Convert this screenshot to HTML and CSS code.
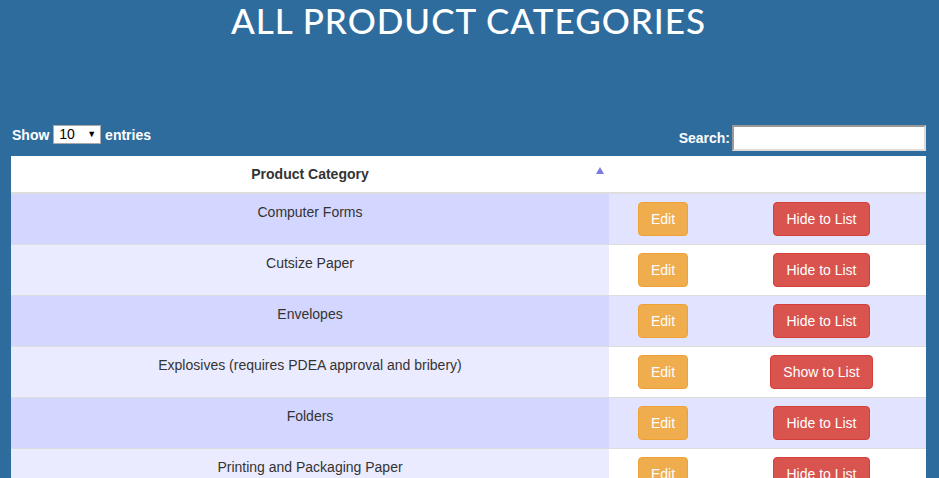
FILE: index.html
```html
<!DOCTYPE html>
<html>
<head>
<meta charset="utf-8">
<title>All Product Categories</title>
<link rel="stylesheet" href="styles.css">
</head>
<body>
<div class="page">
  <h1 class="title">ALL PRODUCT CATEGORIES</h1>
  <div class="controls">
    <label class="length">Show <span class="select">10<span class="caret">&#9660;</span></span> entries</label>
    <label class="filter">Search:<input class="search" type="text"></label>
  </div>
  <table class="table">
    <colgroup>
      <col class="c1">
      <col class="c2">
      <col class="c3">
    </colgroup>
    <thead>
      <tr>
        <th class="sorted">Product Category</th>
        <th></th>
        <th></th>
      </tr>
    </thead>
    <tbody>
      <tr class="odd">
        <td class="sort">Computer Forms</td>
        <td><span class="btn warn">Edit</span></td>
        <td><span class="btn danger">Hide to List</span></td>
      </tr>
      <tr class="even">
        <td class="sort">Cutsize Paper</td>
        <td><span class="btn warn">Edit</span></td>
        <td><span class="btn danger">Hide to List</span></td>
      </tr>
      <tr class="odd">
        <td class="sort">Envelopes</td>
        <td><span class="btn warn">Edit</span></td>
        <td><span class="btn danger">Hide to List</span></td>
      </tr>
      <tr class="even">
        <td class="sort">Explosives (requires PDEA approval and bribery)</td>
        <td><span class="btn warn">Edit</span></td>
        <td><span class="btn danger">Show to List</span></td>
      </tr>
      <tr class="odd">
        <td class="sort">Folders</td>
        <td><span class="btn warn">Edit</span></td>
        <td><span class="btn danger">Hide to List</span></td>
      </tr>
      <tr class="even">
        <td class="sort">Printing and Packaging Paper</td>
        <td><span class="btn warn">Edit</span></td>
        <td><span class="btn danger">Hide to List</span></td>
      </tr>
    </tbody>
  </table>
</div>
</body>
</html>
```
FILE: styles.css
```css
html {
  overflow: hidden;
}
body {
  margin: 0;
  background: #2e6c9e;
  font-family: "Liberation Sans", Arial, sans-serif;
  font-size: 14px;
  color: #333;
}
.page {
  padding: 0 13px 0 11px;
}
.title {
  margin: 0;
  padding-top: 0;
  height: 125px;
  font-family: "Lato", "Open Sans", sans-serif;
  font-weight: 500;
  font-size: 35px;
  letter-spacing: 1px;
  line-height: 40px;
  text-align: center;
  color: #fff;
}
.controls {
  display: flex;
  justify-content: space-between;
  align-items: flex-start;
  height: 31px;
}
.length {
  line-height: 20px;
  font-weight: bold;
  color: #fff;
  padding-left: 1px;
}
.select {
  display: inline-block;
  vertical-align: top;
  box-sizing: border-box;
  width: 48px;
  height: 19px;
  margin: 0;
  padding-left: 5px;
  background: #fff;
  border: 1px solid #a9a9a9;
  color: #000;
  font-weight: normal;
  font-size: 14px;
  line-height: 17px;
  position: relative;
}
.caret {
  position: absolute;
  right: 4px;
  top: 0;
  font-size: 9px;
  line-height: 17px;
}
.filter {
  display: flex;
  align-items: center;
  font-weight: bold;
  color: #fff;
  line-height: 20px;
}
.search {
  box-sizing: border-box;
  width: 194px;
  height: 26px;
  margin: 0 0 0 2px;
  padding: 0 4px;
  background: #fff;
  border-style: solid;
  border-width: 2px;
  border-color: #9a9a9a #dcdcdc #dcdcdc #9a9a9a;
  font: 14px "Liberation Sans", Arial, sans-serif;
}
.table {
  width: 915px;
  border-collapse: collapse;
  background: #fff;
  table-layout: fixed;
}
.c1 { width: 598px; }
.c2 { width: 108px; }
.c3 { width: 209px; }
.table th {
  padding: 8px;
  line-height: 20px;
  font-weight: bold;
  text-align: center;
  border-bottom: 2px solid #ddd;
}
.table th.sorted {
  position: relative;
}
.table th.sorted::after {
  content: "";
  position: absolute;
  right: 5px;
  top: 11px;
  width: 0;
  height: 0;
  border-left: 4.5px solid transparent;
  border-right: 4.5px solid transparent;
  border-bottom: 7px solid #7b7be0;
}
.table td {
  padding: 8px;
  line-height: 20px;
  text-align: center;
  vertical-align: top;
  border-top: 1px solid #ddd;
}
.odd { background: #e2e4ff; }
.odd td.sort { background: #d3d6ff; }
.even { background: #fff; }
.even td.sort { background: #eaebff; }
.btn {
  display: inline-block;
  padding: 6px 12px;
  font-size: 14px;
  line-height: 20px;
  border: 1px solid transparent;
  border-radius: 4px;
  color: #fff;
}
.warn {
  background: #f0ad4e;
  border-color: #eea236;
}
.danger {
  background: #d9534f;
  border-color: #d43f3a;
}
```
